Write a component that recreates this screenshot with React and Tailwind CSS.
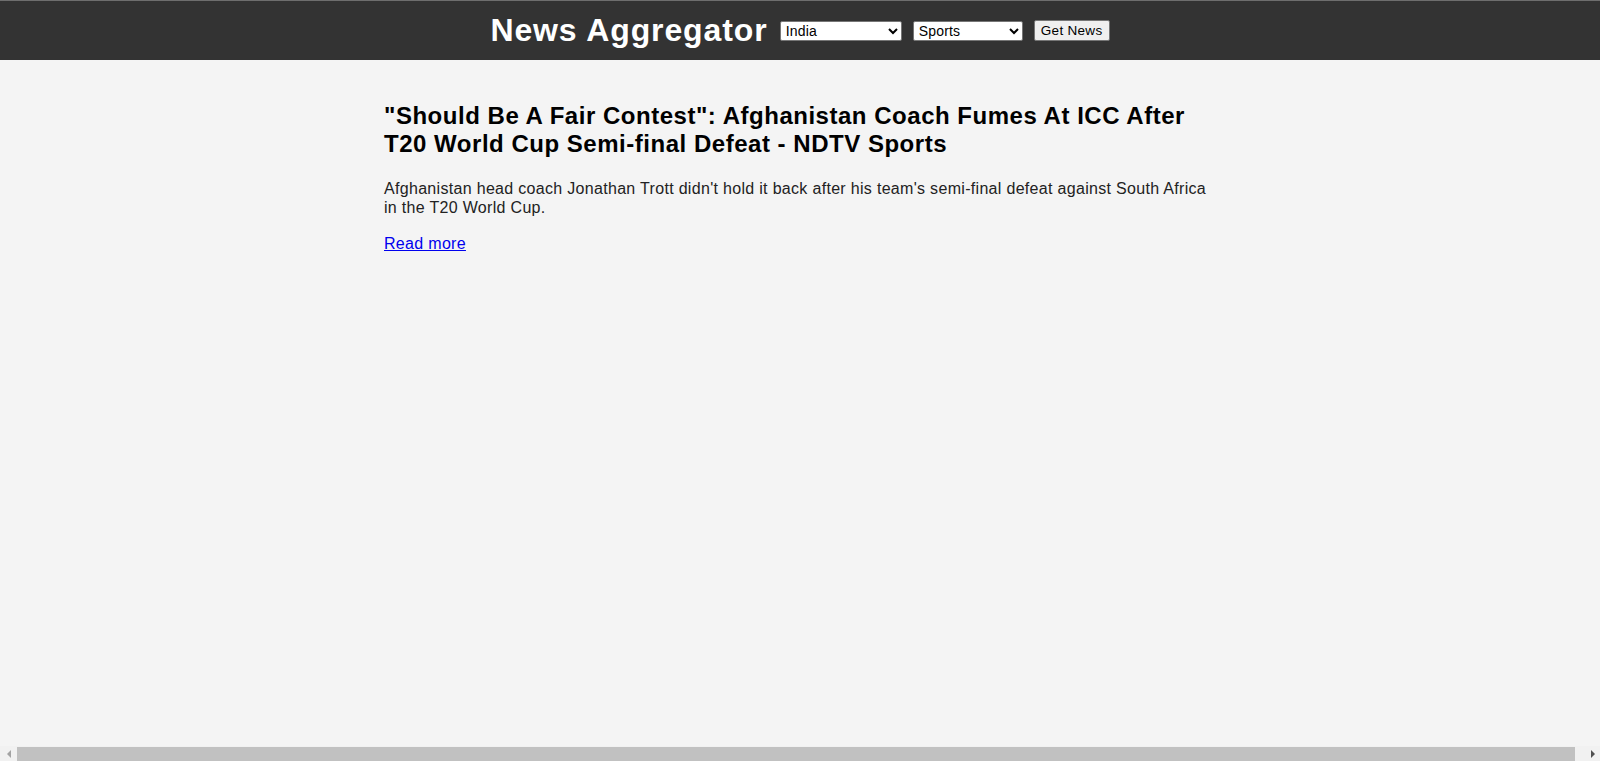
import React, { useState } from "react";

const article = {
  title: "\"Should Be A Fair Contest\": Afghanistan Coach Fumes At ICC After T20 World Cup Semi-final Defeat - NDTV Sports",
  description:
    "Afghanistan head coach Jonathan Trott didn't hold it back after his team's semi-final defeat against South Africa in the T20 World Cup.",
  url: "#",
};

export default function App() {
  const [country, setCountry] = useState("in");
  const [category, setCategory] = useState("sports");

  return (
    <div className="h-screen flex flex-col bg-[#f4f4f4] font-['Liberation_Sans',Arial,sans-serif] overflow-hidden">
      {/* Header */}
      <header className="h-[60px] shrink-0 border-t border-t-[#6e6e6e] bg-[#333] flex items-center justify-center">
        <h1 className="text-[32px] font-bold leading-[normal] tracking-[0.9px] text-white">News Aggregator</h1>
        <select
          value={country}
          onChange={(e) => setCountry(e.target.value)}
          className="ml-[12px] w-[122px] h-[20px] bg-white text-black text-[14px] tracking-[0.2px] border border-[#767676] rounded-[2px] pl-[1px]"
        >
          <option value="in">India</option>
          <option value="us">United States</option>
          <option value="gb">United Kingdom</option>
        </select>
        <select
          value={category}
          onChange={(e) => setCategory(e.target.value)}
          className="ml-[11px] w-[110px] h-[20px] bg-white text-black text-[14px] tracking-[0.2px] border border-[#767676] rounded-[2px] pl-[1px]"
        >
          <option value="business">Business</option>
          <option value="entertainment">Entertainment</option>
          <option value="sports">Sports</option>
          <option value="technology">Technology</option>
        </select>
        <button className="ml-[11px] w-[76px] h-[21px] bg-[#efefef] text-black text-[13.5px] tracking-[0.3px] border border-[#767676] rounded-[2px] px-[4px]">
          Get News
        </button>
      </header>

      {/* Articles */}
      <main className="flex-1 pt-[42px]">
        <div className="w-[832px] mx-auto">
          <h2 className="text-[24px] font-bold leading-[normal] tracking-[0.52px] text-black mb-[21px]">{article.title}</h2>
          <p className="text-[16px] leading-[19px] tracking-[0.31px] text-[#222] mb-[18px]">{article.description}</p>
          <p className="text-[16px] leading-[normal] tracking-[0.31px]">
            <a href={article.url} className="text-[#0000ee] underline">Read more</a>
          </p>
        </div>
      </main>

      {/* Horizontal scrollbar */}
      <div className="h-[15px] shrink-0 flex bg-[#f1f1f1]">
        <div className="w-[17px] flex items-center justify-center">
          <div className="w-0 h-0 border-y-[4px] border-y-transparent border-r-[4px] border-r-[#a3a3a3]" />
        </div>
        <div className="flex-1 mt-[1px] bg-[#c1c1c1]" />
        <div className="w-[25px] flex items-center justify-end pr-[5px]">
          <div className="w-0 h-0 border-y-[4px] border-y-transparent border-l-[4px] border-l-[#505050]" />
        </div>
      </div>
    </div>
  );
}
